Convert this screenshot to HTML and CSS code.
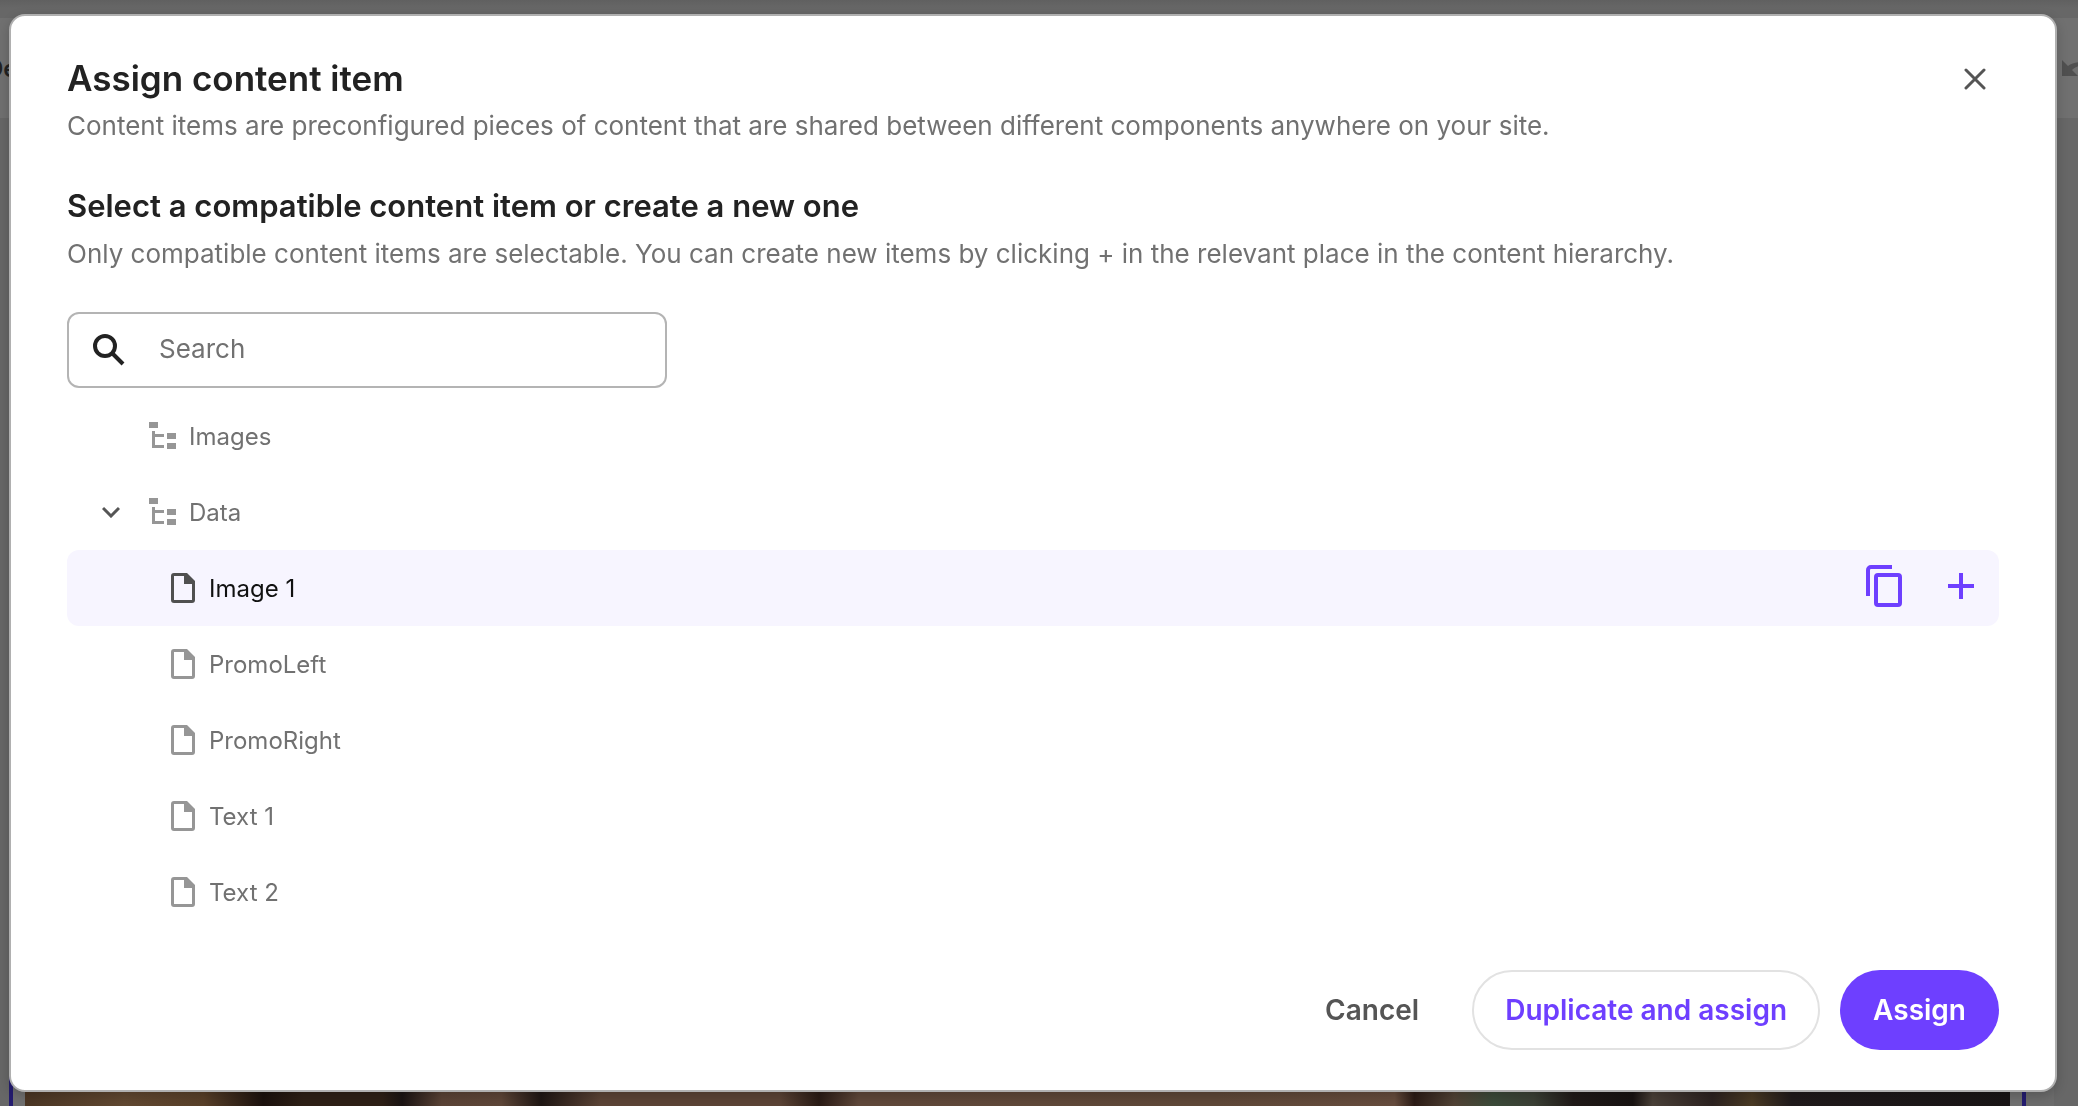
FILE: index.html
```html
<!DOCTYPE html>
<html lang="en">
<head>
<meta charset="utf-8">
<title>Assign content item</title>
<meta name="viewport" content="width=device-width, initial-scale=1">
<link rel="stylesheet" href="styles.css">
</head>
<body>
<svg class="sprite" aria-hidden="true">
  <symbol id="tree" viewBox="0 0 28 28"><path d="M0 0h9v6H0zM18 11h9v6h-9zM18 21h9v6h-9zM3 9h3v3h9v3H6v8h9v3H3z"/></symbol>
  <symbol id="file" viewBox="0 0 24 30"><path fill-rule="evenodd" d="M3 0h13l8 8v19a3 3 0 0 1-3 3H3a3 3 0 0 1-3-3V3a3 3 0 0 1 3-3zM3 3v24h18V11h-8V3z"/></symbol>
</svg>

<div class="editor" aria-hidden="true">
  <div class="editor-top"></div>
  <div class="editor-toolbar">
    <span class="editor-tab">De</span>
    <svg class="editor-undo" width="32" height="17" viewBox="0 0 32 17"><path d="M0 0l6 6c4-3 9-4 14-4l9 2v4c-8-4-14-3-19 2l6 6H0z"/></svg>
  </div>
  <div class="editor-canvas"><div class="editor-page"><div class="editor-photo"></div></div></div>
</div>

<div class="overlay">
  <section class="dialog" role="dialog" aria-modal="true" aria-labelledby="dialog-title">
    <header class="dialog-header">
      <div>
        <h1 class="dialog-title" id="dialog-title">Assign content item</h1>
        <p class="description">Content items are preconfigured pieces of content that are shared between different components anywhere on your site.</p>
      </div>
      <button class="icon-button close" type="button" aria-label="Close">
        <svg width="22" height="22" viewBox="0 0 22 22" fill="none" stroke="currentColor" stroke-width="3" stroke-linecap="round"><path d="M2 2l18 18M20 2L2 20"/></svg>
      </button>
    </header>

    <h2 class="section-title">Select a compatible content item or create a new one</h2>
    <p class="description">Only compatible content items are selectable. You can create new items by clicking + in the relevant place in the content hierarchy.</p>

    <label class="search">
      <svg width="32" height="32" viewBox="0 0 32 32" fill="none" stroke="currentColor" stroke-width="4"><circle cx="12" cy="12" r="10"/><path d="M19 19l11 11"/></svg>
      <input class="search-input" type="text" placeholder="Search" aria-label="Search">
    </label>

    <ul class="tree" role="tree">
      <li class="row" role="treeitem"><span class="toggle"></span><svg class="icon-tree"><use href="#tree"/></svg><span>Images</span></li>
      <li class="row" role="treeitem" aria-expanded="true">
        <button class="icon-button toggle" type="button" aria-label="Collapse Data"><svg width="18" height="12" viewBox="0 0 18 12" fill="none" stroke="currentColor" stroke-width="3"><path d="M1 2l8 8 8-8"/></svg></button>
        <svg class="icon-tree"><use href="#tree"/></svg><span>Data</span>
      </li>
      <li class="row child selected" role="treeitem" aria-selected="true">
        <svg class="icon-file"><use href="#file"/></svg><span>Image 1</span>
        <div class="row-actions">
          <button class="icon-button" type="button" aria-label="Duplicate"><svg width="36" height="42" viewBox="0 0 36 42" fill="none" stroke="currentColor" stroke-width="4"><path d="M2 31V5a3 3 0 0 1 3-3h21"/><rect x="10" y="10" width="24" height="30" rx="2"/></svg></button>
          <button class="icon-button" type="button" aria-label="Add item"><svg width="26" height="26" viewBox="0 0 26 26" fill="none" stroke="currentColor" stroke-width="4"><path d="M13 0v26M0 13h26"/></svg></button>
        </div>
      </li>
      <li class="row child" role="treeitem"><svg class="icon-file"><use href="#file"/></svg><span>PromoLeft</span></li>
      <li class="row child" role="treeitem"><svg class="icon-file"><use href="#file"/></svg><span>PromoRight</span></li>
      <li class="row child" role="treeitem"><svg class="icon-file"><use href="#file"/></svg><span>Text 1</span></li>
      <li class="row child" role="treeitem"><svg class="icon-file"><use href="#file"/></svg><span>Text 2</span></li>
    </ul>

    <footer class="dialog-footer">
      <button class="button ghost" type="button">Cancel</button>
      <button class="button outline" type="button">Duplicate and assign</button>
      <button class="button primary" type="button">Assign</button>
    </footer>
  </section>
</div>
</body>
</html>
```

FILE: styles.css
```css
* { box-sizing: border-box; }

body {
  margin: 0;
  font-family: Inter, "Liberation Sans", sans-serif;
  color: #717171;
  background: #676767;
}

h1, h2, p, ul { margin: 0; padding: 0; }
svg { display: block; flex: none; }
button, input { font: inherit; }
.sprite { position: absolute; width: 0; height: 0; }

/* Dimmed editor behind the dialog */
.editor {
  position: fixed;
  inset: 0;
  display: flex;
  flex-direction: column;
  overflow: hidden;
}
.editor-top { height: 18px; background: linear-gradient(#606060, #676767 8px); }
.editor-toolbar {
  display: flex;
  justify-content: space-between;
  align-items: center;
  height: 100px;
  background: #707070;
}
.editor-tab { margin-left: -14px; font-size: 24px; font-weight: 600; color: #222; }
.editor-undo { margin-right: -16px; fill: #505050; }
.editor-canvas { flex: 1; display: flex; padding: 0 24px 0 9px; }
.editor-page {
  flex: 1;
  display: flex;
  margin-right: 28px;
  padding: 0 12px;
  border: solid #241c70;
  border-width: 0 4px;
  background: #707070;
  box-shadow: 28px 0 #6c6c6c;
}
.editor-photo {
  flex: 1;
  background: linear-gradient(90deg, #4b3624 0, #614831 5%, #594029 9%, #1c120e 12%, #2e2016 14%, #2e2016 18%, #1b1413 19%, #5b4336 21%, #5e4638 24%, #1f1613 26%, #5c4436 29%, #5c4436 38%, #2a1b15 40%, #60483a 42%, #5f4838 60%, #664c3d 69%, #2c1c16 70%, #514235 72%, #3b4a39 74%, #3b4035 76%, #201a18 78%, #181312 81%, #4a4038 82%, #2c2220 85%, #4a3a24 87%, #201a1b 89%, #191516 100%);
}

.overlay {
  position: relative;
  display: flex;
  min-height: 100vh;
  padding: 14px 21px 14px 9px;
}
.dialog {
  flex: 1;
  display: flex;
  flex-direction: column;
  padding: 38px 56px 40px;
  border: 2px solid #b0b0b0;
  border-radius: 16px;
  background: #fff;
  box-shadow: 0 4px 12px rgba(0, 0, 0, 0.2);
}
.dialog-header { display: flex; justify-content: space-between; }
.dialog-title { font-size: 35px; line-height: 48px; font-weight: 600; color: #222; }
.section-title { margin-top: 32px; font-size: 31px; line-height: 48px; font-weight: 600; color: #222; }
.description { font-size: 26px; line-height: 48px; }

.icon-button {
  display: flex;
  align-items: center;
  justify-content: center;
  padding: 0;
  border: 0;
  background: none;
  color: inherit;
  cursor: pointer;
}
.close { width: 48px; height: 50px; color: #555; }

.search {
  display: flex;
  align-items: center;
  gap: 34px;
  width: 600px;
  max-width: 100%;
  height: 76px;
  margin-top: 34px;
  padding: 0 24px;
  border: 2px solid #b4b4b4;
  border-radius: 12px;
  color: #222;
}
.search-input { flex: 1; min-width: 0; padding: 0 0 4px; border: 0; outline: 0; font-size: 26px; background: none; }
.search-input::placeholder { color: #717171; opacity: 1; }

.tree { margin-top: 10px; list-style: none; }
.row {
  display: flex;
  align-items: center;
  height: 76px;
  padding-left: 26px;
  border-radius: 12px;
  font-size: 24px;
}
.row.child { padding-left: 104px; }
.row.selected { color: #111; background: #f7f5ff; }
.toggle { width: 36px; height: 36px; margin-right: 20px; color: #555; }
.icon-tree { width: 28px; height: 28px; margin-right: 12px; fill: #969696; }
.icon-file { width: 24px; height: 30px; margin-right: 14px; fill: #969696; }
.selected .icon-file { fill: #505050; }
.row-actions { display: flex; align-items: center; gap: 46px; margin-left: auto; padding: 0 25px 4px 0; color: #6e3fff; }

.dialog-footer { display: flex; justify-content: flex-end; gap: 20px; margin-top: auto; }
.button {
  height: 80px;
  padding: 0 31px;
  border: 2px solid transparent;
  border-radius: 40px;
  background: none;
  font-size: 28px;
  font-weight: 600;
  cursor: pointer;
}
.ghost { color: #555; }
.outline { border-color: #e2e2e2; color: #6e3fff; }
.primary { background: #6e3fff; color: #fff; }
```
